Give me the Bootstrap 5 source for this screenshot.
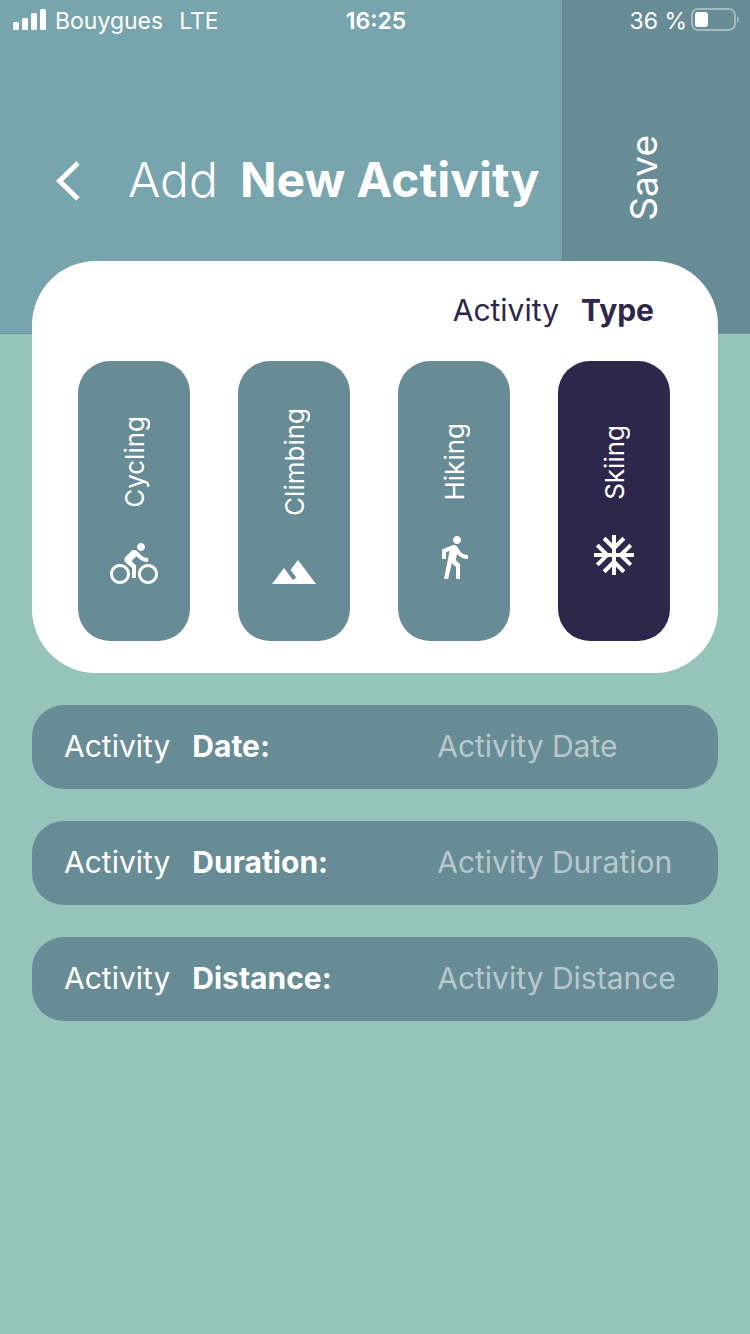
<!DOCTYPE html>
<html lang="en">
<head>
<meta charset="utf-8">
<meta name="viewport" content="width=device-width, initial-scale=1">
<title>Add New Activity</title>
<link href="https://cdn.jsdelivr.net/npm/bootstrap@5.3.0/dist/css/bootstrap.min.css" rel="stylesheet">
<style>
  :root { --mint: #97c4ba; --teal: #78a5ad; --slate: #688c95; --night: #2d274b; }
  body { background: var(--mint); font-family: Inter, "Liberation Sans", sans-serif; color: #fff; min-height: 100vh; }
  b { font-weight: 700; }
  .status-bar { height: 42px; font-size: 23px; line-height: 42px; padding: 0 11px 0 13px; }
  .status-bar > * { flex: 1 1 0; }
  .status-bar svg { margin-bottom: 2px; }
  .status-time { font-weight: 600; }
  .top-area { background: var(--teal); height: 334px; border-bottom: 1px solid #6d969b; }
  .title-bar { padding: 28px 0 0 56px; }
  .title-bar h1 { font-size: 48px; line-height: 56px; font-weight: 300; margin: 0 0 2px 48px; gap: 22px; }
  .save-btn { background: var(--slate); border: 0; border-left: 1px solid #5f858e; color: #fff; font-size: 37px; line-height: 48px; padding: 22px 24px 0 0; margin-left: -1px; }
  .upright { writing-mode: vertical-rl; transform: rotate(180deg); }
  .type-panel { margin-top: -73px; border-radius: 64px; color: var(--night); padding: 27px 48px 32px 46px; }
  .type-panel legend { font-size: 30px; line-height: 44px; gap: 22px; padding-right: 16px; margin-bottom: 29px; }
  .type-pill { width: 112px; height: 280px; border-radius: 32px; background: var(--slate); color: #fff; font-size: 26px; line-height: 32px; gap: 32px; padding-top: 2px; cursor: pointer; }
  .type-pill .upright { margin-left: 2px; }
  .btn-check:checked + .type-pill { background: var(--night); }
  .type-pill svg { width: 48px; height: 48px; fill: currentColor; }
  .field-row { background: var(--slate); border-radius: 32px; height: 84px; padding: 0 32px 2px; font-size: 30px; }
  .field-row label { flex: 0 0 60%; gap: 22px; }
  .field-row input { flex: 1 1 0; min-width: 0; background: none; border: 0; padding: 0; color: #fff; outline: 0; }
  .field-row input::placeholder { color: #b8c8cd; opacity: 1; }
</style>
</head>
<body>
<header class="top-area position-relative d-flex">
  <div class="status-bar position-absolute top-0 start-0 w-100 d-flex align-items-center">
    <div class="d-flex align-items-center">
      <svg class="me-2" width="34" height="22" viewBox="0 0 34 22" fill="#fff" aria-hidden="true"><rect y="13" width="6" height="8" rx="1.500"/><rect x="9" y="9" width="6" height="12" rx="1.500"/><rect x="18" y="4" width="6" height="17" rx="1.500"/><rect x="27" y="0" width="6" height="21" rx="1.500"/></svg>
      <span class="me-3">Bouygues</span><span>LTE</span>
    </div>
    <div class="status-time text-center">16:25</div>
    <div class="d-flex align-items-center justify-content-end">
      <span class="me-1">36 %</span>
      <svg width="48" height="24" viewBox="0 0 48 24" aria-hidden="true"><rect x="1" y="1" width="43" height="21" rx="6" fill="none" stroke="#a4babf" stroke-width="2"/><rect x="4" y="4" width="13" height="15" rx="3" fill="#fff"/><path d="M46 8q2 1 2 3.500t-2 3.500z" fill="#a4babf"/></svg>
    </div>
  </div>
  <div class="title-bar col-9 d-flex align-items-center">
    <a href="#" aria-label="Back" class="d-flex"><svg width="24" height="40" viewBox="0 0 24 40" fill="none" stroke="#fff" stroke-width="5" aria-hidden="true"><path d="M22 2 3.500 20 22 38"/></svg></a>
    <h1 class="d-flex text-nowrap"><span>Add</span><b>New Activity</b></h1>
  </div>
  <button type="button" class="save-btn flex-grow-1 d-flex align-items-center justify-content-center"><span class="upright">Save</span></button>
</header>

<main class="px-4 mx-2">
  <form>
    <fieldset class="type-panel bg-white position-relative">
      <legend class="d-flex justify-content-end"><span>Activity</span><b>Type</b></legend>
      <div class="d-flex justify-content-between">
        <input class="btn-check" type="radio" name="type" id="cycling">
        <label class="type-pill d-flex flex-column align-items-center justify-content-center" for="cycling"><span class="upright">Cycling</span>
          <svg viewBox="0 0 24 24" aria-hidden="true"><path d="M15.500 5.500c1.100 0 2-.9 2-2s-.9-2-2-2-2 .9-2 2 .9 2 2 2zM5 12c-2.800 0-5 2.200-5 5s2.200 5 5 5 5-2.200 5-5-2.200-5-5-5zm0 8.500c-1.900 0-3.500-1.600-3.500-3.500s1.600-3.500 3.500-3.500 3.500 1.600 3.500 3.500-1.600 3.500-3.500 3.500zm5.800-10l2.400-2.400.8.8c1.300 1.300 3 2.100 5.100 2.100V9c-1.500 0-2.700-.6-3.600-1.500l-1.900-1.900c-.5-.4-1-.6-1.600-.6s-1.100.2-1.400.6L7.800 8.400c-.4.4-.6.9-.6 1.400 0 .6.2 1.100.6 1.400L11 14v5h2v-6.200l-2.200-2.300zM19 12c-2.800 0-5 2.200-5 5s2.200 5 5 5 5-2.200 5-5-2.200-5-5-5zm0 8.500c-1.900 0-3.500-1.600-3.500-3.500s1.600-3.500 3.500-3.500 3.500 1.600 3.500 3.500-1.600 3.500-3.500 3.500z"/></svg></label>
        <input class="btn-check" type="radio" name="type" id="climbing">
        <label class="type-pill d-flex flex-column align-items-center justify-content-center" for="climbing"><span class="upright">Climbing</span>
          <svg viewBox="0 0 24 24" aria-hidden="true"><path d="M14 6l-3.750 5 2.850 3.800-1.600 1.200C9.810 13.750 7 10 7 10l-6 8h22L14 6z"/></svg></label>
        <input class="btn-check" type="radio" name="type" id="hiking">
        <label class="type-pill d-flex flex-column align-items-center justify-content-center" for="hiking"><span class="upright">Hiking</span>
          <svg viewBox="0 0 24 24" aria-hidden="true"><path d="M13.500 5.500c1.100 0 2-.9 2-2s-.9-2-2-2-2 .9-2 2 .9 2 2 2zM9.800 8.900L7 23h2.100l1.800-8 2.100 2v6h2v-7.500l-2.100-2 .6-3C14.800 12 16.800 13 19 13v-2c-1.900 0-3.500-1-4.300-2.400l-1-1.600c-.4-.6-1-1-1.700-1-.3 0-.5.1-.8.1L6 8.300V13h2V9.600l1.800-.7"/></svg></label>
        <input class="btn-check" type="radio" name="type" id="skiing" checked>
        <label class="type-pill d-flex flex-column align-items-center justify-content-center" for="skiing"><span class="upright">Skiing</span>
          <svg viewBox="0 0 24 24" aria-hidden="true"><path d="M22 11h-4.170l3.240-3.240-1.410-1.420L15 11h-2V9l4.660-4.660-1.420-1.410L13 6.170V2h-2v4.170L7.760 2.930 6.340 4.340 11 9v2H9L4.340 6.340 2.930 7.760 6.170 11H2v2h4.170l-3.240 3.240 1.410 1.420L9 13h2v2l-4.660 4.660 1.420 1.410L11 17.830V22h2v-4.170l3.240 3.240 1.420-1.410L13 15v-2h2l4.660 4.660 1.410-1.420L17.830 13H22z"/></svg></label>
      </div>
    </fieldset>
    <div class="d-flex flex-column mt-4 pt-2 gap-4">
      <div class="field-row d-flex align-items-center mb-2"><label class="d-flex" for="date"><span>Activity</span><b>Date:</b></label><input id="date" type="text" placeholder="Activity Date"></div>
      <div class="field-row d-flex align-items-center mb-2"><label class="d-flex" for="duration"><span>Activity</span><b>Duration:</b></label><input id="duration" type="text" placeholder="Activity Duration"></div>
      <div class="field-row d-flex align-items-center mb-2"><label class="d-flex" for="distance"><span>Activity</span><b>Distance:</b></label><input id="distance" type="text" placeholder="Activity Distance"></div>
    </div>
  </form>
</main>
<script src="https://cdn.jsdelivr.net/npm/bootstrap@5.3.0/dist/js/bootstrap.bundle.min.js"></script>
</body>
</html>
